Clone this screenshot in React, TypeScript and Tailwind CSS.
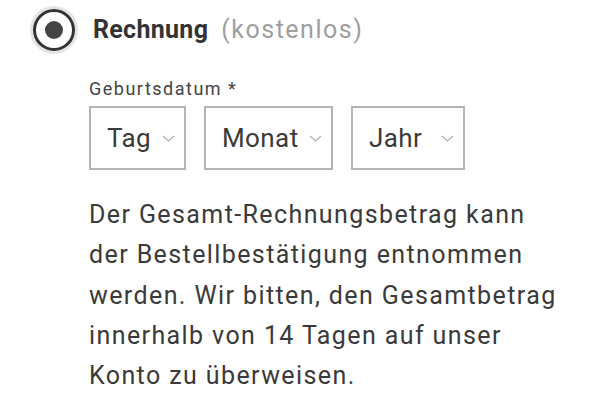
export default function App() {
  const selects = [
    { label: 'Tag', w: 'w-[97px]' },
    { label: 'Monat', w: 'w-[129px]' },
    { label: 'Jahr', w: 'w-[114px]' },
  ];

  return (
    <div className="w-[590px] h-[410px] bg-white text-[#3a3a3a] font-['Roboto',sans-serif] overflow-hidden">
      <div className="flex items-center pl-[33px] pt-[9px]">
        <div className="w-[42px] h-[42px] rounded-full border-[3px] border-[#333] flex items-center justify-center shadow-[0_0_0_3px_#e4e4e4]">
          <div className="w-[18px] h-[18px] rounded-full bg-[#444]" />
        </div>
        <div className="ml-[18px] text-[25px] leading-[40px]">
          <span className="font-bold text-[#333] tracking-[0.3px]">Rechnung</span>
          <span className="ml-[13px] text-[#9e9e9e] tracking-[1.5px]">(kostenlos)</span>
        </div>
      </div>

      <div className="pl-[89px] pt-[28px]">
        <div className="text-[18px] leading-[20px] tracking-[1.5px] text-[#444]">Geburtsdatum *</div>
        <div className="flex gap-[18px] mt-[7px]">
          {selects.map((s) => (
            <div
              key={s.label}
              className={`${s.w} h-[64px] border-2 border-[#b4b4b4] flex items-center justify-between pl-[16px] pr-[9px]`}
            >
              <span className="text-[26px] tracking-[0.4px] text-[#3a3a3a]">{s.label}</span>
              <svg width="13" height="7" viewBox="0 0 13 7" fill="none">
                <path d="M1 1l5.5 5 5.5-5" stroke="#b0b0b0" strokeWidth="1.2" />
              </svg>
            </div>
          ))}
        </div>

        <p className="mt-[25px] w-[480px] text-[25px] leading-[40.3px] tracking-[1.4px] text-[#3a3a3a]">
          Der Gesamt-Rechnungsbetrag kann der Bestellbestätigung entnommen werden. Wir bitten, den Gesamtbetrag
          innerhalb von 14 Tagen auf unser Konto zu überweisen.
        </p>
      </div>
    </div>
  );
}
